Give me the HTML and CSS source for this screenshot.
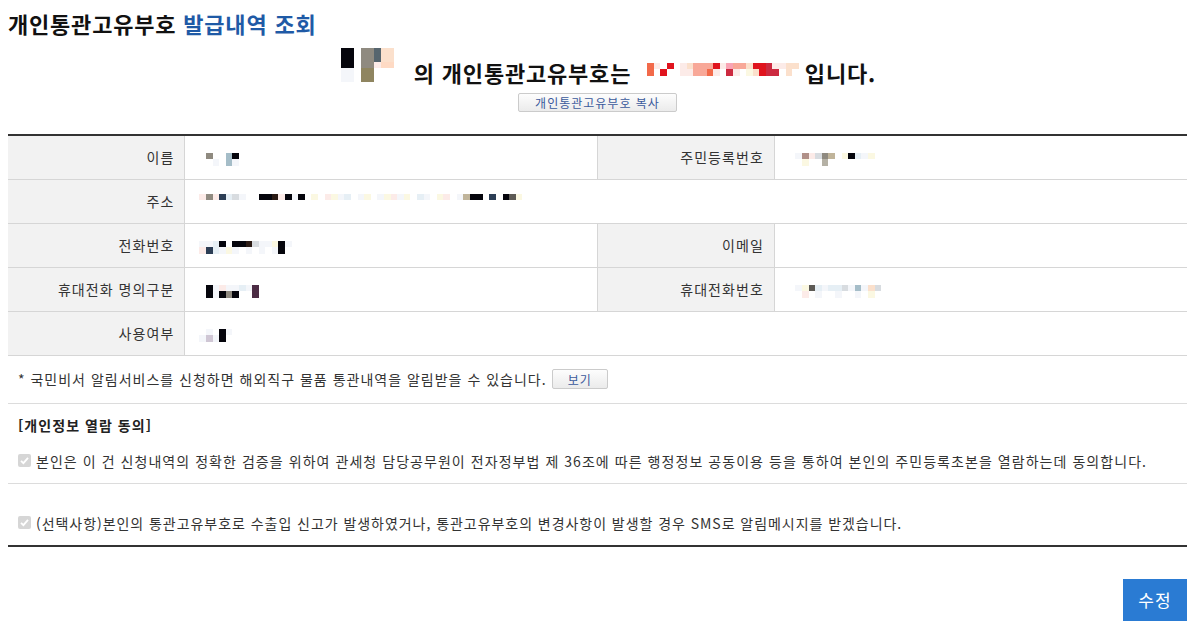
FILE: index.html
```html
<!DOCTYPE html>
<html lang="ko">
<head>
<meta charset="utf-8">
<title>개인통관고유부호 발급내역 조회</title>
<link rel="stylesheet" href="styles.css">
</head>
<body>
<div class="page">
  <h1 class="title">개인통관고유부호 <span class="accent">발급내역 조회</span></h1>

  <div class="result">
    <span class="mz r5 name-mz">
      <i class="k"></i><i class="k"></i><i class="k"></i><i class="x"></i><i class="x"></i>
      <i class="k"></i><i class="k"></i><i class="k"></i><i class="x"></i><i class="x"></i>
      <i></i><i></i><i></i><i></i><i></i>
      <i class="g"></i><i class="g"></i><i class="g"></i><i class="o"></i><i class="o"></i>
      <i class="g"></i><i class="g"></i><i class="g"></i><i class="o"></i><i class="o"></i>
      <i class="s"></i><i class="s"></i><i class="lp"></i><i></i><i></i>
      <i class="p"></i><i class="p"></i><i class="p2"></i><i></i><i></i>
      <i class="p"></i><i class="p"></i><i class="p2"></i><i></i><i></i>
    </span>
    <span class="result-text">의 개인통관고유부호는</span>
    <span class="mz r2 code-mz">
      <i class="or"></i><i class="or"></i>
      <i class="lp"></i><i></i>
      <i></i><i class="r"></i>
      <i class="r"></i><i></i>
      <i></i><i></i>
      <i class="lp"></i><i class="lp"></i>
      <i class="p"></i><i class="lp"></i>
      <i class="sa"></i><i class="sa"></i>
      <i class="sa"></i><i class="sa"></i>
      <i class="sa"></i><i class="or"></i>
      <i class="r"></i><i class="lp"></i>
      <i class="lp"></i><i></i>
      <i class="pk"></i><i class="cr"></i>
      <i class="sa"></i><i class="lp"></i>
      <i class="sa"></i><i></i>
      <i class="p"></i><i class="ly"></i>
      <i class="r"></i><i class="p"></i>
      <i class="r"></i><i class="r"></i>
      <i class="cr"></i><i class="cr"></i>
      <i class="lp"></i><i class="cr"></i>
      <i class="lp"></i><i></i>
      <i class="p"></i><i class="p"></i>
      <i class="p"></i><i></i>
    </span>
    <span class="result-text">입니다.</span>
  </div>

  <div class="copy-row">
    <button type="button" class="btn-sm">개인통관고유부호 복사</button>
  </div>

  <table class="info">
    <colgroup>
      <col class="c-label"><col class="c-value"><col class="c-label"><col class="c-value">
    </colgroup>
    <tbody>
      <tr>
        <th>이름</th>
        <td class="bd-r">
          <span class="mz r2">
            <i></i><i></i>
            <i class="g"></i><i></i>
            <i></i><i class="x"></i>
            <i></i><i></i>
            <i class="lb"></i><i class="lb"></i>
            <i class="k"></i><i class="x"></i>
          </span>
        </td>
        <th>주민등록번호</th>
        <td>
          <span class="mz r2">
            <i></i><i></i>
            <i class="x"></i><i></i>
            <i class="br"></i><i class="ly"></i>
            <i class="lp"></i><i></i>
            <i class="lg"></i><i></i>
            <i class="g"></i><i class="bg"></i>
            <i class="be"></i><i></i>
            <i></i><i></i>
            <i class="ly"></i><i></i>
            <i class="k"></i><i></i>
            <i class="lc"></i><i></i>
            <i class="x"></i><i></i>
            <i class="ly"></i><i></i>
          </span>
        </td>
      </tr>
      <tr>
        <th>주소</th>
        <td colspan="3">
          <span class="mz r2 top">
            <i class="lp"></i><i></i>
            <i class="g"></i><i></i>
            <i class="lp"></i><i></i>
            <i class="n"></i><i></i>
            <i class="lc"></i><i></i>
            <i class="lg"></i><i></i>
            <i class="x"></i><i></i>
            <i></i><i></i>
            <i></i><i></i>
            <i class="k"></i><i></i>
            <i class="k"></i><i></i>
            <i class="dk"></i><i></i>
            <i class="lp"></i><i></i>
            <i class="k"></i><i></i>
            <i class="x"></i><i></i>
            <i class="k"></i><i></i>
            <i></i><i></i>
            <i class="ly"></i><i></i>
            <i></i><i></i>
            <i class="lp"></i><i></i>
            <i class="ly"></i><i></i>
            <i class="x"></i><i></i>
            <i class="lc"></i><i></i>
            <i></i><i></i>
            <i class="x"></i><i></i>
            <i class="ly"></i><i></i>
            <i></i><i></i>
            <i class="x"></i><i></i>
            <i class="ly"></i><i></i>
            <i class="lp"></i><i></i>
            <i class="x"></i><i></i>
            <i class="ly"></i><i></i>
            <i></i><i></i>
            <i class="lc"></i><i></i>
            <i class="x"></i><i></i>
            <i></i><i></i>
            <i class="ly"></i><i></i>
            <i class="lp"></i><i></i>
            <i></i><i></i>
            <i class="x"></i><i></i>
            <i class="be"></i><i></i>
            <i class="k"></i><i></i>
            <i class="k"></i><i></i>
            <i></i><i></i>
            <i class="n"></i><i></i>
            <i></i><i></i>
            <i class="k"></i><i></i>
            <i class="dg"></i><i></i>
            <i class="ly"></i><i></i>
          </span>
        </td>
      </tr>
      <tr>
        <th>전화번호</th>
        <td class="bd-r">
          <span class="mz r2">
            <i class="x"></i><i class="lp"></i>
            <i class="x"></i><i class="n"></i>
            <i class="lc"></i><i class="lc"></i>
            <i class="k"></i><i class="x"></i>
            <i></i><i class="ly"></i>
            <i class="k"></i><i class="x"></i>
            <i class="k"></i><i></i>
            <i class="dk"></i><i class="x"></i>
            <i class="lg"></i><i></i>
            <i class="x"></i><i class="x"></i>
            <i class="x"></i><i></i>
            <i class="ly"></i><i class="x"></i>
            <i class="k"></i><i class="k"></i>
            <i class="x"></i><i></i>
          </span>
        </td>
        <th>이메일</th>
        <td></td>
      </tr>
      <tr>
        <th>휴대전화 명의구분</th>
        <td class="bd-r">
          <span class="mz r2">
            <i></i><i></i>
            <i class="k"></i><i class="k"></i>
            <i class="x"></i><i class="x"></i>
            <i class="lp"></i><i class="k"></i>
            <i class="x"></i><i class="g"></i>
            <i class="x"></i><i class="k"></i>
            <i class="lc"></i><i></i>
            <i class="x"></i><i></i>
            <i class="pu"></i><i class="pu"></i>
          </span>
        </td>
        <th>휴대전화번호</th>
        <td>
          <span class="mz r2">
            <i></i><i></i>
            <i class="x"></i><i></i>
            <i class="ly"></i><i class="lp"></i>
            <i class="dg"></i><i></i>
            <i class="lc"></i><i class="x"></i>
            <i class="x"></i><i></i>
            <i class="lc"></i><i></i>
            <i class="lc"></i><i class="x"></i>
            <i class="lg"></i><i></i>
            <i class="x"></i><i></i>
            <i class="lb"></i><i class="x"></i>
            <i class="x"></i><i></i>
            <i class="p"></i><i class="ly"></i>
            <i class="lg"></i><i></i>
          </span>
        </td>
      </tr>
      <tr>
        <th>사용여부</th>
        <td colspan="3">
          <span class="mz r2">
            <i></i><i class="x"></i>
            <i class="x"></i><i class="pg"></i>
            <i></i><i class="x"></i>
            <i class="k"></i><i class="k"></i>
            <i class="x"></i><i></i>
          </span>
        </td>
      </tr>
    </tbody>
  </table>

  <div class="notice">
    <span>* 국민비서 알림서비스를 신청하면 해외직구 물품 통관내역을 알림받을 수 있습니다.</span>
    <button type="button" class="btn-sm btn-view">보기</button>
  </div>

  <div class="agree">
    <p class="agree-title">[개인정보 열람 동의]</p>
    <div class="chk-row">
      <span class="chk"><svg viewBox="0 0 13 13" width="13" height="13"><path d="M3 6.8 L5.4 9.2 L10 3.8" fill="none" stroke="#fff" stroke-width="1.8"/></svg></span>
      <span>본인은 이 건 신청내역의 정확한 검증을 위하여 관세청 담당공무원이 전자정부법 제 36조에 따른 행정정보 공동이용 등을 통하여 본인의 주민등록초본을 열람하는데 동의합니다.</span>
    </div>
  </div>

  <div class="agree agree-sms">
    <div class="chk-row">
      <span class="chk"><svg viewBox="0 0 13 13" width="13" height="13"><path d="M3 6.8 L5.4 9.2 L10 3.8" fill="none" stroke="#fff" stroke-width="1.8"/></svg></span>
      <span class="sms-text">(선택사항)본인의 통관고유부호로 수출입 신고가 발생하였거나, 통관고유부호의 변경사항이 발생할 경우 SMS로 알림메시지를 받겠습니다.</span>
    </div>
  </div>

  <div class="actions">
    <button type="button" class="btn-primary">수정</button>
  </div>
</div>
</body>
</html>
```

FILE: styles.css
```css
* { box-sizing: border-box; }

html, body {
  margin: 0;
  padding: 0;
  background: #fff;
}

body {
  font-family: "Noto Sans CJK KR", "Noto Sans", sans-serif;
  color: #333;
  font-size: 14px;
  letter-spacing: 1.05px;
}

.page {
  padding: 0 8px;
}

.title {
  margin: 0;
  padding-top: 8px;
  font-size: 22px;
  line-height: 30px;
  font-weight: 700;
  color: #111;
  letter-spacing: 0.8px;
}

.title .accent {
  color: #1f5aa6;
}

.result {
  display: flex;
  justify-content: center;
  align-items: flex-end;
  height: 34px;
  margin-top: 10px;
  padding-left: 22px;
}

.result-text {
  font-size: 22px;
  line-height: 20px;
  font-weight: 700;
  color: #111;
  letter-spacing: 0.8px;
}

.name-mz {
  margin-right: 20px;
}

.code-mz {
  margin: 0 6px 6px 16px;
}

/* mosaic redaction blocks */
.mz {
  display: inline-grid;
  grid-auto-flow: column;
  grid-auto-columns: 6.6px;
  vertical-align: middle;
}

.mz.r2 { grid-template-rows: repeat(2, 6.6px); }
.mz.r5 { grid-template-rows: repeat(5, 6.8px); }
.mz.top { position: relative; top: -3px; }

.mz i { display: block; }
.mz .k  { background: #05050c; }
.mz .g  { background: #8f8a80; }
.mz .o  { background: #8f8560; }
.mz .s  { background: #56656e; }
.mz .lb { background: #a5bdc8; }
.mz .n  { background: #2c3e55; }
.mz .dk { background: #2a1a14; }
.mz .dg { background: #5d5a55; }
.mz .pu { background: #4c2c44; }
.mz .bg { background: #b5b1a5; }
.mz .be { background: #c0b49a; }
.mz .br { background: #b09088; }
.mz .pg { background: #cfc6d4; }
.mz .p  { background: #fbe0cc; }
.mz .p2 { background: #fedac4; }
.mz .r  { background: #e0141e; }
.mz .cr { background: #cc2a40; }
.mz .sa { background: #f8a898; }
.mz .or { background: #f26a4a; }
.mz .pk { background: #f9a4b4; }
.mz .x  { background: #f4f6fa; }
.mz .lp { background: #fcebe8; }
.mz .ly { background: #fbf8e2; }
.mz .lc { background: #e6eff5; }
.mz .lg { background: #d8dce0; }

.copy-row {
  display: flex;
  justify-content: center;
  margin-top: 11px;
}

.btn-sm {
  font-family: "Noto Sans CJK KR", "Noto Sans", sans-serif;
  font-size: 12px;
  line-height: 17px;
  letter-spacing: 1px;
  height: 19px;
  padding: 0 16px;
  color: #3b5a9c;
  background: linear-gradient(#fdfdfd, #ebebeb);
  border: 1px solid #cbcbcb;
  border-radius: 2px;
  cursor: pointer;
}

.info {
  width: 100%;
  margin-top: 22px;
  border-collapse: collapse;
  border-top: 2px solid #333;
  table-layout: fixed;
}

.info .c-label { width: 15%; }
.info .c-value { width: 35%; }

.info th,
.info td {
  height: 44px;
  border-bottom: 1px solid #d6d6d6;
  font-size: 14px;
  font-weight: 400;
  padding: 0;
}

.info th {
  background: #f2f2f2;
  text-align: right;
  padding-right: 10px;
  border-right: 1px solid #d6d6d6;
  color: #333;
}

.info td {
  padding-left: 14px;
  text-align: left;
}

.info td.bd-r {
  border-right: 1px solid #d6d6d6;
}

.notice {
  display: flex;
  align-items: center;
  height: 48px;
  padding-left: 10px;
  border-bottom: 1px solid #dcdcdc;
  color: #333;
  letter-spacing: 1px;
}

.btn-view {
  margin-left: 5px;
  height: 20px;
  padding: 0 15px;
}

.agree {
  padding: 11px 10px 12px;
  border-bottom: 1px solid #dcdcdc;
}

.agree-title {
  margin: 0 0 16px;
  font-size: 14px;
  line-height: 20px;
  font-weight: 700;
  color: #222;
}

.chk-row {
  display: flex;
  align-items: center;
  line-height: 20px;
  color: #333;
}

.sms-text {
  letter-spacing: 0.95px;
}

.chk {
  display: inline-block;
  width: 13px;
  height: 13px;
  margin-right: 5px;
  background: #d6d6d6;
  border: 0;
  border-radius: 2px;
  flex: none;
}

.chk svg { display: block; }

.agree-sms {
  padding-top: 29px;
  border-bottom: 2px solid #333;
}

.actions {
  display: flex;
  justify-content: flex-end;
  margin-top: 32px;
}

.btn-primary {
  font-family: "Noto Sans CJK KR", "Noto Sans", sans-serif;
  width: 64px;
  height: 42px;
  font-size: 17px;
  letter-spacing: 1px;
  color: #fff;
  background: #2a7bd3;
  border: 0;
  border-radius: 0;
  cursor: pointer;
}
```
